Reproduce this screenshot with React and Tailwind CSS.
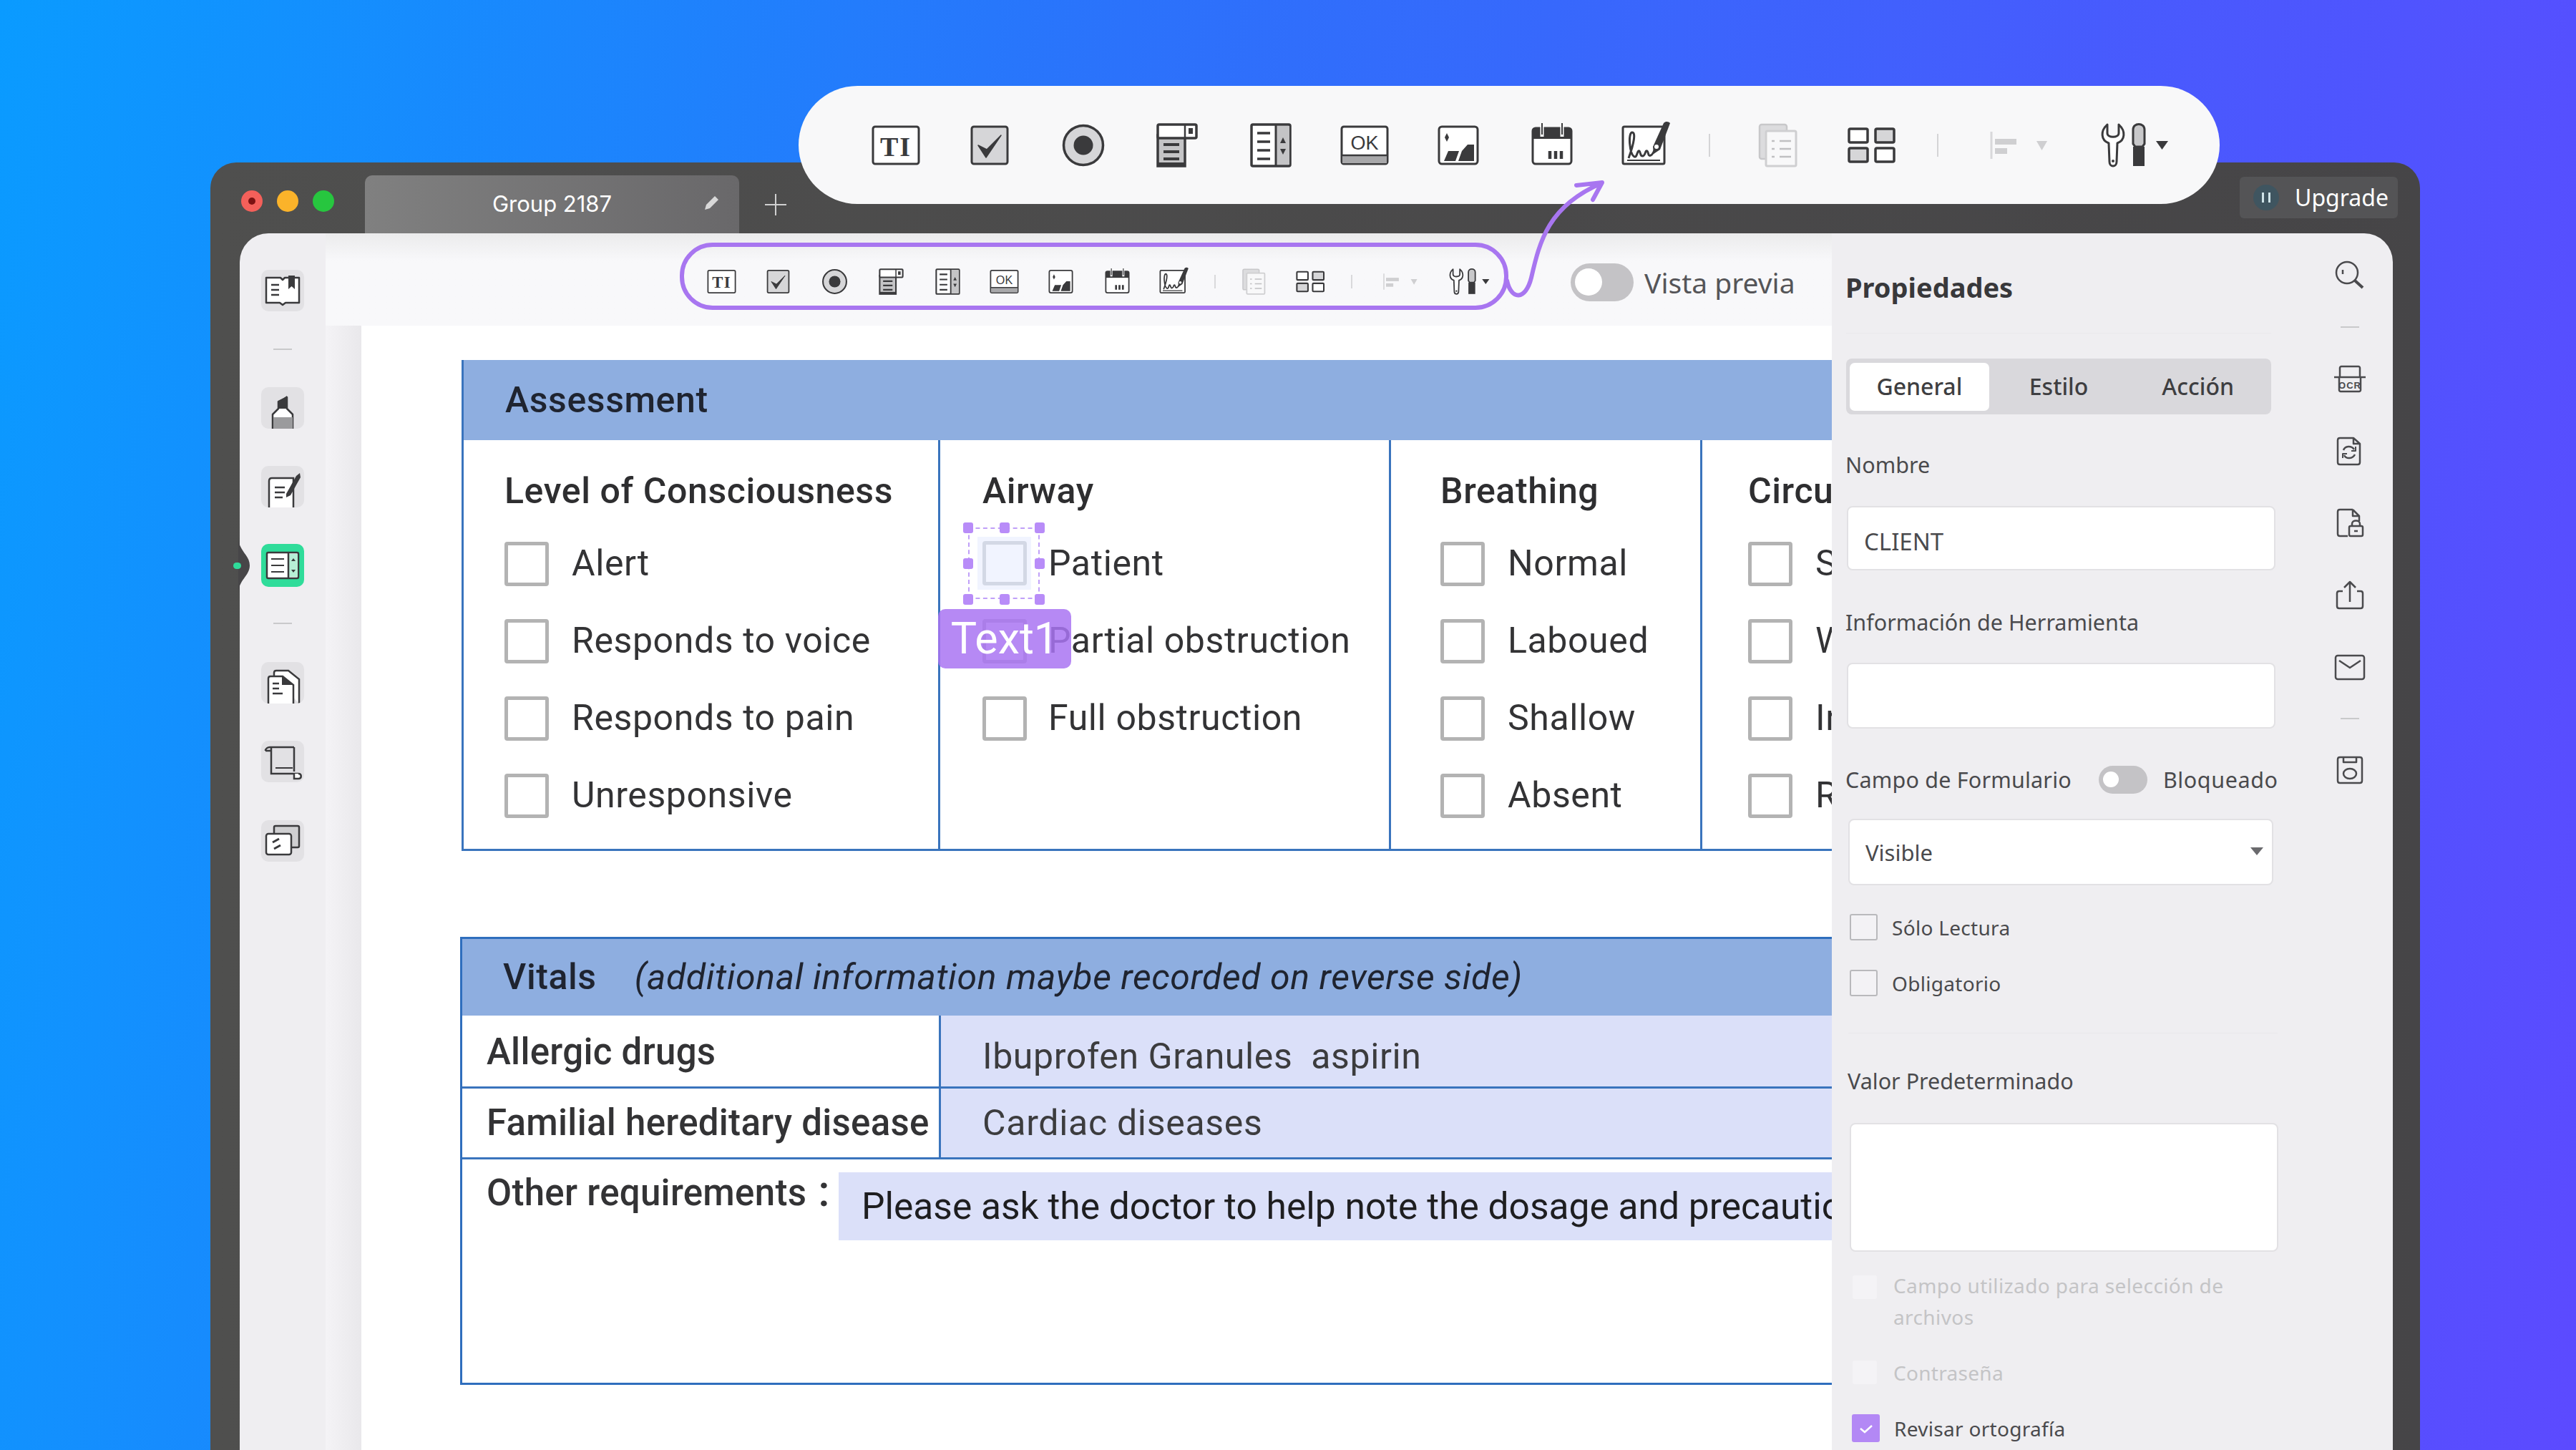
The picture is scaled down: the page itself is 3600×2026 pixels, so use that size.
import React from "react";

const D = "#3a3a3c";
const G = "#d6d6d8";
const Svg72 = ({ className, children }) => (
  <svg viewBox="0 0 72 72" className={className} style={{ overflow: "visible" }} fill="none">{children}</svg>
);
const Svg108 = ({ className, children }) => (
  <svg viewBox="0 0 108 72" className={className} style={{ overflow: "visible" }} fill="none">{children}</svg>
);
const IconTI = ({ className }) => (
  <Svg72 className={className}>
    <rect x="4" y="10" width="64" height="52" rx="3" fill="#fff" stroke={D} strokeWidth="3" />
    <text x="36" y="51" textAnchor="middle" fontFamily="'Liberation Serif',serif" fontWeight="700" fontSize="38" letterSpacing="2" fill={D}>TI</text>
  </Svg72>
);
const IconCheck = ({ className }) => (
  <Svg72 className={className}>
    <rect x="11" y="10" width="50" height="52" rx="3" fill={G} stroke={D} strokeWidth="3" />
    <path d="M20 36 L31 53 L52 22 L32 42 Z" fill={D} stroke={D} strokeWidth="1.5" strokeLinejoin="round" />
  </Svg72>
);
const IconRadio = ({ className }) => (
  <Svg72 className={className}>
    <circle cx="36" cy="36" r="27.5" fill={G} stroke={D} strokeWidth="3.5" />
    <circle cx="36" cy="36" r="13.5" fill={D} />
  </Svg72>
);
const IconCombo = ({ className }) => (
  <Svg72 className={className}>
    <rect x="9" y="22" width="38" height="43" fill="#c4c4c6" stroke={D} strokeWidth="3.5" />
    <rect x="9" y="7" width="54" height="19" rx="2" fill="#fff" stroke={D} strokeWidth="3.5" />
    <rect x="9" y="60" width="38" height="5" fill={D} />
    <path d="M47 7v19" stroke={D} strokeWidth="2.5" />
    <rect x="52" y="12" width="6" height="8" fill={D} />
    <path d="M17 35h22M17 45h22M17 55h22" stroke={D} strokeWidth="4" />
  </Svg72>
);
const IconList = ({ className }) => (
  <Svg72 className={className}>
    <rect x="9" y="7" width="54" height="58" rx="2" fill="#fff" stroke={D} strokeWidth="3.5" />
    <rect x="43" y="9" width="19" height="54" fill="#c4c4c6" />
    <path d="M43 7v58" stroke={D} strokeWidth="3" />
    <path d="M17 19h18M17 31h18M17 43h18M17 55h18" stroke={D} strokeWidth="3.5" />
    <path d="M53 25l-4 8h8zM53 49l-4-8h8z" fill={D} />
  </Svg72>
);
const IconOK = ({ className }) => (
  <Svg72 className={className}>
    <rect x="4" y="10" width="64" height="52" rx="3" fill="#fff" stroke={D} strokeWidth="3" />
    <rect x="5" y="50" width="62" height="11" fill="#a8a8aa" />
    <path d="M4 50h64" stroke={D} strokeWidth="2.5" />
    <text x="36" y="42" textAnchor="middle" fontFamily="'Liberation Sans',sans-serif" fontSize="27" fill={D}>OK</text>
  </Svg72>
);
const IconImage = ({ className }) => (
  <Svg72 className={className}>
    <rect x="9" y="10" width="54" height="52" rx="4" fill="#fff" stroke={D} strokeWidth="3" />
    <path d="M20 19l3 6-3 6-3-6z" fill={D} />
    <path d="M16 58l6-14h15l-5 14zM36 58l5-14 8-9h9v23z" fill={D} />
  </Svg72>
);
const IconCalendar = ({ className }) => (
  <Svg72 className={className}>
    <rect x="9" y="12" width="54" height="50" rx="4" fill="#fff" stroke={D} strokeWidth="3" />
    <rect x="9" y="12" width="54" height="15" fill={D} />
    <path d="M22 5v19M50 5v19" stroke="#fff" strokeWidth="5" />
    <path d="M22 5v16M50 5v16" stroke={D} strokeWidth="2" />
    <path d="M33 44v11M41 44v11M49 44v11" stroke={D} strokeWidth="4.5" />
  </Svg72>
);
const IconSign = ({ className }) => (
  <Svg72 className={className}>
    <rect x="4" y="10" width="58" height="52" rx="2" fill="#fff" stroke={D} strokeWidth="3" />
    <path d="M10 57h46" stroke={D} strokeWidth="2" />
    <path d="M12 54C20 32 22 18 17 18 11 18 13 48 20 52 24 54 24 42 27 44 29 46 28 52 32 51 36 50 35 42 38 44 40 46 39 52 43 50 48 48 50 36 52 32" stroke={D} strokeWidth="3" />
    <path d="M47 48l-1-10 15-33c3-3 7-2 9 0L56 42z" fill={D} />
    <circle cx="51" cy="38" r="3" fill="#fff" />
  </Svg72>
);
const IconCopy = ({ className }) => (
  <Svg72 className={className}>
    <rect x="10" y="7" width="38" height="48" rx="3" fill="#dcdcde" stroke="#c8c8ca" strokeWidth="2.5" />
    <rect x="19" y="16" width="42" height="49" rx="2" fill="#f8f8f9" stroke="#cfcfd1" strokeWidth="3" />
    <path d="M38 30h16M38 41h16M38 52h16M27 30h4M27 41h4M27 52h4" stroke="#c0c0c2" strokeWidth="2.5" />
  </Svg72>
);
const IconGrid = ({ className }) => (
  <Svg72 className={className}>
    <rect x="4" y="13" width="26" height="19" rx="2" fill="#fff" stroke={D} strokeWidth="3.5" />
    <rect x="41" y="13" width="26" height="19" rx="2" fill={G} stroke={D} strokeWidth="3.5" />
    <rect x="4" y="40" width="26" height="19" rx="2" fill={G} stroke={D} strokeWidth="3.5" />
    <rect x="41" y="40" width="26" height="19" rx="2" fill="#fff" stroke={D} strokeWidth="3.5" />
  </Svg72>
);
const IconAlign = ({ className }) => (
  <Svg108 className={className}>
    <path d="M18 17v38" stroke="#d8d8da" strokeWidth="3" />
    <rect x="23" y="27" width="30" height="8" fill="#cfcfd1" />
    <rect x="23" y="40" width="17" height="8" fill="#cfcfd1" />
    <path d="M81 30h15l-7.500 13z" fill="#cfcfd1" />
  </Svg108>
);
const IconTools = ({ className }) => (
  <Svg108 className={className}>
    <path d="M14 7C4 16 5 29 16 33l1 26c0 8 10 8 10 0l1-26C39 29 40 16 30 7v12c0 7-16 7-16 0z" fill="#fff" stroke={D} strokeWidth="3" strokeLinejoin="round" />
    <circle cx="22" cy="58" r="2" fill={D} />
    <path d="M50 14c0-10 16-10 16 0v20l-3 4H53l-3-4z" fill="#c8c8ca" stroke={D} strokeWidth="3" />
    <rect x="50" y="38" width="16" height="27" fill={D} />
    <path d="M82 30h17l-8.500 12z" fill={D} />
  </Svg108>
);

const Sep = ({ className }) => <div className={className} />;

function BigToolbar() {
  return (
    <div className="absolute left-[1116px] top-[120px] z-20 flex h-[165px] w-[1986px] items-center rounded-full bg-[#f8f8f9] pl-[70px]">
      {[IconTI, IconCheck, IconRadio, IconCombo, IconList, IconOK, IconImage, IconCalendar, IconSign].map((I, i) => (
        <div key={i} className="flex w-[131px] shrink-0 justify-center"><I className="h-[72px] w-[72px]" /></div>
      ))}
      <Sep className="ml-[23px] h-[32px] w-[2px] shrink-0 bg-[#d4d4d6]" />
      <div className="ml-[29px] flex w-[131px] shrink-0 justify-center"><IconCopy className="h-[72px] w-[72px]" /></div>
      <div className="flex w-[131px] shrink-0 justify-center"><IconGrid className="h-[72px] w-[72px]" /></div>
      <Sep className="ml-[26px] h-[32px] w-[2px] shrink-0 bg-[#d4d4d6]" />
      <IconAlign className="ml-[56px] h-[72px] w-[108px] shrink-0" />
      <IconTools className="ml-[58px] h-[72px] w-[108px] shrink-0" />
    </div>
  );
}
function SmallToolbar() {
  return (
    <div className="-mt-[9px] flex h-[94px] w-[1158px] shrink-0 items-center rounded-[46px] border-[6px] border-[#a876f0] pl-[13px] pt-[14px]">
      {[IconTI, IconCheck, IconRadio, IconCombo, IconList, IconOK, IconImage, IconCalendar, IconSign].map((I, i) => (
        <div key={i} className="flex w-[79px] shrink-0 justify-center"><I className="h-[43px] w-[43px]" /></div>
      ))}
      <Sep className="ml-[17px] h-[19px] w-[2px] shrink-0 bg-[#d9d9db]" />
      <div className="ml-[14px] flex w-[79px] shrink-0 justify-center"><IconCopy className="h-[43px] w-[43px]" /></div>
      <div className="flex w-[79px] shrink-0 justify-center"><IconGrid className="h-[43px] w-[43px]" /></div>
      <Sep className="ml-[17px] h-[19px] w-[2px] shrink-0 bg-[#d9d9db]" />
      <IconAlign className="ml-[33px] h-[43px] w-[65px] shrink-0" />
      <IconTools className="ml-[34px] h-[43px] w-[65px] shrink-0" />
    </div>
  );
}

const Tile = ({ children, active }) => (
  <div className={active ? "flex h-[60px] w-[60px] items-center justify-center overflow-hidden rounded-[10px] bg-[#2fdc9a]" : "flex h-[58px] w-[60px] items-center justify-center overflow-hidden rounded-[10px] bg-[#e2e1e4]"}>
    <svg viewBox="0 0 60 58" className="h-[58px] w-[60px]" fill="none">{children}</svg>
  </div>
);
const Dash = ({ className }) => <div className={className} />;

function LeftBar() {
  return (
    <div className="flex w-[120px] shrink-0 flex-col items-center bg-[#efeef1] pt-[51px]">
      <Tile>
        <path d="M7 11h20l3 3 3-3h20v35H34l-4 3-4-3H7z" fill="#fff" stroke={D} strokeWidth="2.5" strokeLinejoin="round" />
        <path d="M14 21h11M14 28h11M14 35h11" stroke={D} strokeWidth="2.5" />
        <path d="M38 8h9v19l-4.500-4-4.500 4z" fill={D} />
      </Tile>
      <Dash className="mt-[52px] h-[2px] w-[26px] bg-[#c9c9cb]" />
      <div className="mt-[52px]">
        <Tile>
          <path d="M16 58V38l8-8V20l12-6v16l8 8v20z" fill="#fff" stroke={D} strokeWidth="2.5" strokeLinejoin="round" />
          <path d="M24 30l1-10 11-8v18z" fill={D} />
          <path d="M17 42h27v16H17z" fill="#9b9b9d" />
        </Tile>
      </div>
      <div className="mt-[52px]">
        <Tile>
          <path d="M11 58V21c0-3 2-4 4-4h30v41" fill="#fff" stroke={D} strokeWidth="2.5" />
          <path d="M19 30h14M19 37h14M19 44h11" stroke={D} strokeWidth="2.500" />
          <path d="M35 39l14-25 5-4 1 6-14 25-6 3z" fill={D} />
        </Tile>
      </div>
      <div className="mt-[51px]">
        <Tile active>
          <rect x="8" y="11" width="44" height="36" rx="2" fill="#fff" stroke={D} strokeWidth="2.5" />
          <rect x="38" y="13" width="13" height="32" fill="#b7efd6" />
          <path d="M38 11v36" stroke={D} strokeWidth="2.5" />
          <path d="M14 20h18M14 29h18M14 38h18" stroke={D} strokeWidth="2" />
          <path d="M45 19l-3 4h6zM45 39l-3-4h6z" fill={D} />
        </Tile>
      </div>
      <Dash className="mt-[50px] h-[2px] w-[26px] bg-[#c9c9cb]" />
      <div className="mt-[53px]">
        <Tile>
          <path d="M18 20V15c0-2 1-3 3-3h17l15 12v34" fill="#fff" stroke={D} strokeWidth="2.5" />
          <path d="M10 58V23c0-2 1-3 3-3h17l15 12v26" fill="#fff" stroke={D} strokeWidth="2.5" />
          <path d="M29 20l16 12H29z" fill={D} />
          <path d="M16 30h9M16 37h9M16 44h14" stroke={D} strokeWidth="2.500" />
        </Tile>
      </div>
      <div className="mt-[52px]">
        <Tile>
          <path d="M6 14c0-3 3-5 6-5h34" stroke={D} strokeWidth="2.500" />
          <path d="M14 9v37h38M6 14h8" stroke={D} strokeWidth="2.500" />
          <path d="M46 9v34" stroke={D} strokeWidth="2.500" />
          <path d="M20 38h24" stroke={D} strokeWidth="2" />
          <path d="M46 46v7h6c5 0 5-7 0-7" fill="#fff" stroke={D} strokeWidth="2.500" />
        </Tile>
      </div>
      <div className="mt-[53px]">
        <Tile>
          <rect x="18" y="8" width="35" height="30" rx="2" fill="#cfcfd1" stroke={D} strokeWidth="2.500" />
          <rect x="7" y="19" width="35" height="29" rx="3" fill="#fff" stroke={D} strokeWidth="2.500" />
          <path d="M16 31l9-5M18 40l9-5" stroke={D} strokeWidth="3" />
        </Tile>
      </div>
    </div>
  );
}

const Chk = () => <div className="h-[62px] w-[62px] shrink-0 rounded-[4px] border-[5px] border-[#b3b3b3] bg-white" />;

function Row({ label, gap = "ml-[32px]", before }) {
  return (
    <div className="flex h-[62px] items-center">
      <div className="relative h-[62px] w-[62px] shrink-0">
        <Chk />
        {before}
      </div>
      <span className={`${gap} -mt-[2px] whitespace-nowrap text-[50px] leading-none tracking-[0.6px] text-[#333335]`}>{label}</span>
    </div>
  );
}

const Handle = ({ className }) => <div className={`absolute h-[15px] w-[14px] rounded-[3px] bg-[#b88cf8] ${className}`} />;

function Selection() {
  return (
    <>
      <div className="absolute -left-[20px] -top-[20px] h-[100px] w-[100px] border-2 border-dashed border-[#c0a0f8]" />
      <div className="absolute -left-[7px] -top-[7px] flex h-[74px] w-[75px] items-center justify-center bg-[#f1f4ff]">
        <div className="h-[62px] w-[62px] rounded-[4px] border-[5px] border-[#d3d8e5] bg-[#f1f4ff]" />
      </div>
      <Handle className="-left-[27px] -top-[27px]" />
      <Handle className="left-[24px] -top-[27px]" />
      <Handle className="left-[73px] -top-[27px]" />
      <Handle className="-left-[27px] top-[23px]" />
      <Handle className="left-[73px] top-[23px]" />
      <Handle className="-left-[27px] top-[73px]" />
      <Handle className="left-[24px] top-[73px]" />
      <Handle className="left-[73px] top-[73px]" />
    </>
  );
}

function Col({ title, items, className, gap, border = true, specials = {} }) {
  return (
    <div className={`${className} ${border ? "border-r-[3px] border-[#3a74bd]" : ""} shrink-0 pt-[48px]`}>
      <div className="h-[46px] whitespace-nowrap text-[50px] font-medium leading-[46px] tracking-[0.6px] text-[#2e2e30]">{title}</div>
      <div className="mt-[48px] flex flex-col gap-[46px]">
        {items.map((t, i) => <Row key={t} label={t} gap={gap} before={specials[i]} />)}
      </div>
    </div>
  );
}

function Page() {
  return (
    <div className="min-w-0 flex-1 overflow-hidden bg-white pl-[140px] pt-[48px]" style={{ fontFamily: "Roboto, sans-serif" }}>
      <div className="h-[686px] w-[2100px] border-[3px] border-t-0 border-[#3a74bd]">
        <div className="flex h-[112px] items-center bg-[#8eaee0] pl-[58px] text-[50px] font-medium tracking-[0.6px] text-[#1f2430]">Assessment</div>
        <div className="flex h-[571px]">
          <Col className="w-[666px] pl-[57px]" title="Level of Consciousness" items={["Alert", "Responds to voice", "Responds to pain", "Unresponsive"]} />
          <Col className="w-[630px] pl-[59px]" gap="ml-[30px]" title="Airway" items={["Patient", "Partial obstruction", "Full obstruction"]} specials={{
            0: <Selection />,
            1: (
              <div className="absolute -left-[62px] -top-[14px] z-10 flex h-[83px] w-[186px] items-center justify-center rounded-[10px] bg-[#a974f2]/85 text-[61px] leading-none text-white">Text1</div>
            ),
          }} />
          <Col className="w-[435px] pl-[69px]" title="Breathing" items={["Normal", "Laboued", "Shallow", "Absent"]} />
          <Col className="w-[300px] pl-[64px]" border={false} title="Circulation" items={["Strong", "Weak", "Irregular", "Rapid"]} />
        </div>
      </div>
      <div className="-ml-[2px] mt-[120px] h-[626px] w-[2100px] border-[3px] border-[#2f6ebd]">
        <div className="flex h-[107px] items-center bg-[#8eaee0] pl-[57px] text-[#1f2430]">
          <span className="text-[50px] font-medium tracking-[0.6px]">Vitals</span>
          <span className="ml-[53px] whitespace-nowrap text-[50px] italic tracking-[0.6px]">(additional information maybe recorded on reverse side)</span>
        </div>
        <div className="flex h-[102px] border-b-[3px] border-[#3a74bd]">
          <div className="flex w-[669px] shrink-0 items-center border-r-[3px] border-[#3a74bd] pl-[34px] pt-[4px] text-[51px] font-medium tracking-[0.3px] text-[#333335]">Allergic drugs</div>
          <div className="flex flex-1 items-center bg-[#dbe0f9] pl-[58px] pt-[16px] text-[50px] tracking-[0.6px] text-[#3c3c3e]">Ibuprofen Granules&nbsp; aspirin</div>
        </div>
        <div className="flex h-[99px] border-b-[3px] border-[#3a74bd]">
          <div className="flex w-[669px] shrink-0 items-center border-r-[3px] border-[#3a74bd] pl-[34px] text-[51px] font-medium tracking-[0.3px] text-[#333335]">Familial hereditary disease</div>
          <div className="flex flex-1 items-center bg-[#dbe0f9] pl-[58px] text-[50px] tracking-[0.7px] text-[#3c3c3e]">Cardiac diseases</div>
        </div>
        <div className="flex">
          <div className="flex h-[90px] w-[526px] shrink-0 items-center whitespace-nowrap pl-[34px] pt-[5px] text-[51px] font-medium tracking-[0.3px] text-[#333335]">Other requirements<span className="-mt-[8px] ml-[16px] text-[62px] leading-none">:</span></div>
          <div className="mt-[18px] flex h-[95px] min-w-0 flex-1 items-center whitespace-nowrap bg-[#dbe0f9] pl-[32px] text-[51.500px] text-[#1e1e20]">Please ask the doctor to help note the dosage and precautions before taking the medicine</div>
        </div>
      </div>
    </div>
  );
}

const Field = ({ className, children }) => (
  <div className={`rounded-[8px] border-2 border-[#e2e1e4] bg-white ${className}`}>{children}</div>
);
const Label = ({ className = "", children }) => (
  <div className={`h-[40px] whitespace-nowrap text-[30.500px] leading-[40px] text-[#4a4a4d] ${className}`}>{children}</div>
);
const Cb = ({ className, children }) => <div className={`shrink-0 rounded-[3px] ${className}`}>{children}</div>;

function Props() {
  return (
    <div className="flex w-[670px] shrink-0 flex-col bg-[#efeef1] pl-[19px] pt-[55px]" style={{ fontFamily: "'Noto Sans', sans-serif" }}>
      <div className="h-[40px] text-[38px] font-bold leading-[40px] text-[#38383b]">Propiedades</div>
      <div className="ml-[1px] mt-[44px] h-px w-[594px] bg-[#e9e8eb]" />
      <div className="ml-[1px] mt-[35px] flex h-[78px] w-[594px] items-center rounded-[8px] bg-[#d9d8dc] px-[5px] text-[32px] font-medium text-[#3e3e41]">
        <div className="flex h-[67px] w-[195px] items-center justify-center rounded-[7px] bg-white">General</div>
        <div className="flex w-[195px] items-center justify-center">Estilo</div>
        <div className="flex w-[195px] items-center justify-center">Acción</div>
      </div>
      <Label className="mt-[50px]">Nombre</Label>
      <Field className="ml-[2px] mt-[38px] flex h-[90px] w-[599px] items-center pl-[22px] pt-[9px] text-[33px] text-[#4a4a4d]">CLIENT</Field>
      <Label className="mt-[52px]">Información de Herramienta</Label>
      <Field className="ml-[2px] mt-[37px] h-[92px] w-[599px]" />
      <div className="mt-[51px] flex h-[40px] items-center">
        <Label className="tracking-[0.2px]">Campo de Formulario</Label>
        <div className="ml-[38px] flex h-[39px] w-[68px] items-center rounded-full bg-[#c4c3c6] pl-[6px]">
          <div className="h-[22px] w-[22px] rounded-full bg-white" />
        </div>
        <Label className="ml-[22px] tracking-[0.6px]">Bloqueado</Label>
      </div>
      <Field className="relative ml-[4px] mt-[35px] flex h-[93px] w-[594px] items-center pl-[22px] pt-[2px] text-[31px] text-[#4a4a4d]">
        Visible
        <div className="absolute right-[12px] top-[38px] h-0 w-0 border-x-[9px] border-t-[11px] border-x-transparent border-t-[#6a6a6d]" />
      </Field>
      <div className="ml-[6px] mt-[40px] flex h-[37px] items-center">
        <Cb className="h-[37px] w-[39px] border-2 border-[#b9b9bc] bg-[#f3f2f5]" />
        <span className="ml-[20px] text-[28px] tracking-[0.3px] text-[#4a4a4d]">Sólo Lectura</span>
      </div>
      <div className="ml-[6px] mt-[41px] flex h-[37px] items-center">
        <Cb className="h-[37px] w-[39px] border-2 border-[#b9b9bc] bg-[#f3f2f5]" />
        <span className="ml-[20px] text-[28px] tracking-[0.3px] text-[#4a4a4d]">Obligatorio</span>
      </div>
      <div className="ml-[4px] mt-[51px] h-px w-[600px] bg-[#e9e8eb]" />
      <Label className="ml-[3px] mt-[46px]">Valor Predeterminado</Label>
      <Field className="ml-[6px] mt-[39px] h-[180px] w-[599px]" />
      <div className="ml-[10px] mt-[33px] flex h-[84px] items-start">
        <Cb className="h-[33px] w-[34px] bg-[#f4f3f6]" />
        <span className="-mt-[8px] ml-[23px] text-[28px] leading-[44px] tracking-[0.4px] text-[#c4c4c6]">Campo utilizado para selección de<br />archivos</span>
      </div>
      <div className="ml-[10px] mt-[35px] flex h-[33px] items-center">
        <Cb className="h-[33px] w-[34px] bg-[#f4f3f6]" />
        <span className="ml-[23px] text-[28px] tracking-[0.3px] text-[#c4c4c6]">Contraseña</span>
      </div>
      <div className="ml-[9px] mt-[42px] flex h-[39px] items-center">
        <Cb className="flex h-[39px] w-[39px] items-center justify-center bg-[#b388f5]">
          <svg viewBox="0 0 20 14" className="h-[14px] w-[20px]" fill="none"><path d="M2 7l6 5 10-9" stroke="#fff" strokeWidth="2.500" /></svg>
        </Cb>
        <span className="ml-[20px] text-[28px] tracking-[0.3px] text-[#4a4a4d]">Revisar ortografía</span>
      </div>
    </div>
  );
}

const RailIcon = ({ className, children }) => (
  <svg viewBox="0 0 48 44" className={`h-[44px] w-[48px] ${className}`} fill="none" stroke="#4a4a4d" strokeWidth="2.500" strokeLinejoin="round">{children}</svg>
);
function Rail() {
  return (
    <div className="flex flex-1 flex-col items-center bg-[#efeef1] pr-[6px] pt-[37px]">
      <RailIcon>
        <ellipse cx="20" cy="18" rx="15" ry="15" />
        <path d="M31 29l11 10" strokeWidth="4" />
        <path d="M14 14v6" />
      </RailIcon>
      <Dash className="mt-[49px] h-[2px] w-[26px] bg-[#c9c9cb]" />
      <RailIcon className="mt-[49px]">
        <path d="M10 20V7c0-1 1-2 2-2h24c1 0 2 1 2 2v13M2 20h44M9 20v18c0 1 1 2 2 2h26c1 0 2-1 2-2V20" />
        <text x="24" y="36" textAnchor="middle" fontFamily="'Liberation Sans',sans-serif" fontWeight="700" fontSize="13" letterSpacing="1" fill="#4a4a4d" stroke="none">OCR</text>
      </RailIcon>
      <RailIcon className="mt-[57px]">
        <path d="M10 4h19l9 8v26c0 2-1 3-3 3H10c-2 0-3-1-3-3V7c0-2 1-3 3-3zM29 4v8h9" />
        <path d="M15 21c2-6 11-7 15-1M31 27c-3 6-12 7-15 1" />
        <path d="M32 16v6h-6M14 32v-6h6" strokeWidth="2" />
      </RailIcon>
      <RailIcon className="mt-[56px]">
        <path d="M28 4H10C8 4 7 5 7 7v31c0 2 1 3 3 3h11M28 4l9 9v7M28 4v9h9" />
        <rect x="23" y="27" width="19" height="14" rx="2" />
        <path d="M27 27v-3c0-6 11-6 11 0v3" />
        <path d="M30 34h5" />
      </RailIcon>
      <RailIcon className="mt-[58px]">
        <path d="M14 16H9c-2 0-3 1-3 3v18c0 2 1 3 3 3h30c2 0 3-1 3-3V19c0-2-1-3-3-3h-5M24 31V4M16 11l8-8 8 8" />
      </RailIcon>
      <RailIcon className="mt-[56px]">
        <rect x="4" y="6" width="40" height="33" rx="3" />
        <path d="M9 13l15 10 15-10" />
      </RailIcon>
      <Dash className="mt-[49px] h-[2px] w-[26px] bg-[#c9c9cb]" />
      <RailIcon className="mt-[49px]">
        <path d="M10 4h28c2 0 3 1 3 3v30c0 2-1 3-3 3H10c-2 0-3-1-3-3V7c0-2 1-3 3-3z" />
        <path d="M15 4v7h18V4" />
        <ellipse cx="24" cy="27" rx="9" ry="7" />
      </RailIcon>
    </div>
  );
}

function TitleBar() {
  return (
    <div className="flex h-[99px] shrink-0 items-start pl-[43px]">
      <div className="mt-[39px] flex gap-[20px]">
        <div className="flex h-[30px] w-[30px] items-center justify-center rounded-full bg-[#f4605a]">
          <div className="h-[10px] w-[10px] rounded-full bg-[#7c1212]" />
        </div>
        <div className="h-[30px] w-[30px] rounded-full bg-[#fbb32a]" />
        <div className="h-[30px] w-[30px] rounded-full bg-[#27c63f]" />
      </div>
      <div className="relative ml-[43px] mt-[18px] flex h-[81px] w-[523px] items-center justify-center rounded-t-[10px] bg-gradient-to-r from-[#808080] to-[#69686a] text-[31px] text-white" style={{ fontFamily: "Inter, sans-serif" }}>
        <span>Group 2187</span>
        <svg viewBox="0 0 24 24" className="absolute right-[27px] top-[27px] h-[24px] w-[24px]"><path d="M3 21l2-7L17 2l5 5L10 19z" fill="#d8d8d8" /></svg>
      </div>
      <svg viewBox="0 0 30 30" className="ml-[36px] mt-[44px] h-[30px] w-[30px]"><path d="M15 0v30M0 15h30" stroke="#d0d0d0" strokeWidth="2" /></svg>
      <div className="ml-auto mr-[31px] mt-[20px] flex h-[58px] w-[221px] items-center rounded-[6px] bg-[#545456] pl-[19px] text-[32px] text-white" style={{ fontFamily: "'Noto Sans', sans-serif" }}>
        <div className="flex h-[36px] w-[36px] items-center justify-center rounded-full bg-[#3f5560]">
          <div className="h-[14px] w-[12px] border-x-[3px] border-[#cfe3e8]" />
        </div>
        <span className="ml-[22px]">Upgrade</span>
      </div>
    </div>
  );
}

function TopBar() {
  return (
    <div className="flex h-[129px] shrink-0 items-center bg-gradient-to-b from-[#ebebec] to-[#f8f8fa] to-[30%] pl-[495px]">
      <SmallToolbar />
      <div className="ml-[87px] mt-[7px] flex h-[53px] w-[88px] shrink-0 items-center rounded-full bg-[#c4c3c6] pl-[6px]">
        <div className="h-[38px] w-[38px] rounded-full bg-white" />
      </div>
      <span className="ml-[15px] mt-[8px] whitespace-nowrap text-[39px] leading-none text-[#555558]" style={{ fontFamily: "'Noto Sans', sans-serif" }}>Vista previa</span>
    </div>
  );
}

export default function App() {
  return (
    <div className="relative h-[2026px] w-[3600px] overflow-hidden bg-[linear-gradient(100deg,#0a9bff_0%,#2b72fb_40%,#5c4aff_100%)] pl-[294px] pt-[227px]">
      <div className="relative flex h-[1799px] w-[3088px] flex-col rounded-t-[36px] bg-gradient-to-r from-[#4f4f4e] to-[#464547]">
        <TitleBar />
        <div className="ml-[41px] mr-[38px] flex min-h-0 flex-1 overflow-hidden rounded-t-[40px]">
          <LeftBar />
          <div className="flex w-[2105px] shrink-0 flex-col">
            <TopBar />
            <div className="flex min-h-0 flex-1">
              <div className="w-[50px] shrink-0 bg-gradient-to-r from-[#f4f3f6] to-[#e9e8eb]" />
              <Page />
            </div>
          </div>
          <Props />
          <Rail />
        </div>
        <svg viewBox="0 0 30 80" className="absolute left-[39px] top-[523px] h-[80px] w-[16px]" preserveAspectRatio="none"><path d="M0 0C0 20 30 25 30 40C30 55 0 60 0 80Z" fill="#474648" /></svg>
        <div className="absolute left-[32px] top-[559px] h-[9px] w-[11px] rounded-full bg-[#2fdc9a]" />
      </div>
      <BigToolbar />
      <svg viewBox="0 0 3600 2026" className="pointer-events-none absolute left-0 top-0 z-30 h-[2026px] w-[3600px]" fill="none">
        <path d="M2106 392C2112 420 2132 420 2140 388C2152 336 2164 288 2238 256M2203 259L2239 255L2226 279" stroke="#a876f0" strokeWidth="6" strokeLinecap="round" strokeLinejoin="round" />
      </svg>
    </div>
  );
}
